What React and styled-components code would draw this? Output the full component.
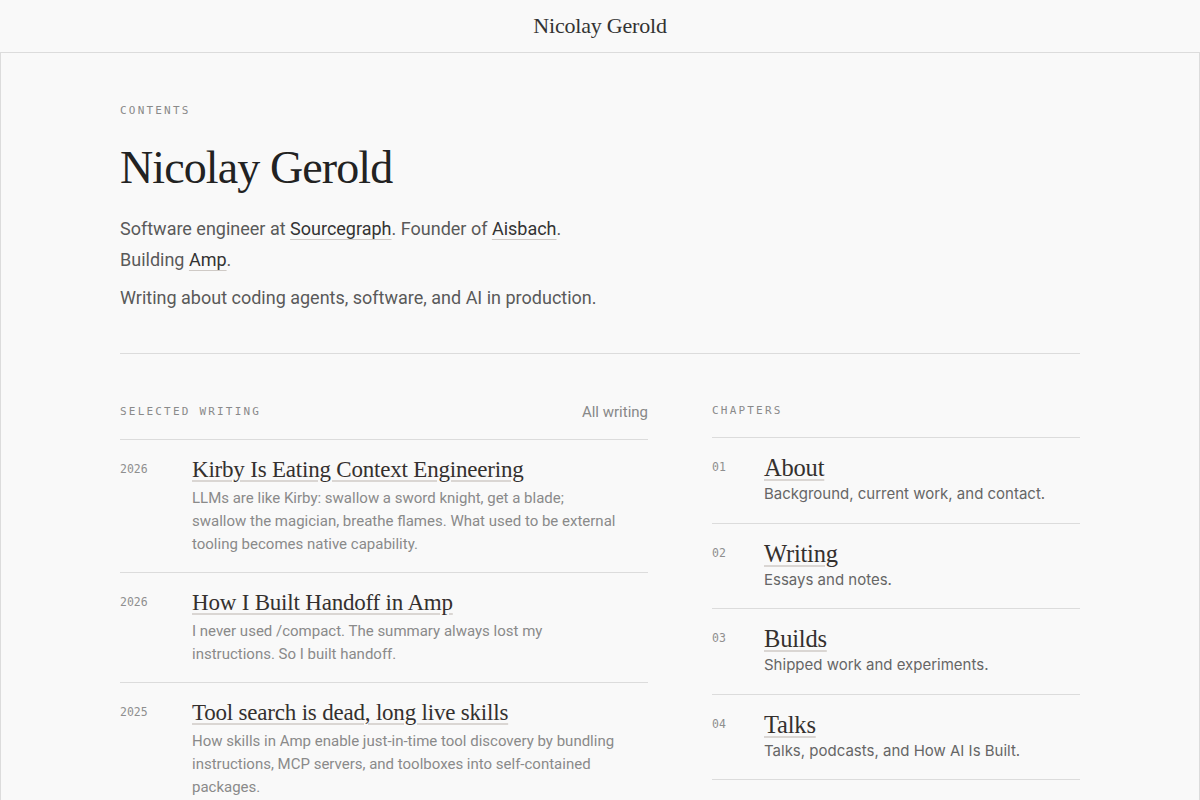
import React from "react";
import styled, { createGlobalStyle } from "styled-components";

const serif = `"Liberation Serif", "DejaVu Serif", serif`;
const sans = `Inter, "Noto Sans", "Liberation Sans", sans-serif`;
const text = `Roboto, Inter, "Liberation Sans", sans-serif`;
const mono = `"DejaVu Sans Mono", "Liberation Mono", monospace`;

const GlobalStyle = createGlobalStyle`
  html, body {
    margin: 0;
    padding: 0;
    background: #f9f9f9;
  }
  body {
    font-family: ${sans};
    color: #333;
    -webkit-font-smoothing: antialiased;
  }
  * { box-sizing: border-box; }
`;

const Page = styled.div`
  min-height: 100vh;
  display: flex;
  flex-direction: column;
  background: #f9f9f9;
`;

const TopBar = styled.header`
  height: 53px;
  display: flex;
  align-items: center;
  justify-content: center;
  border-bottom: 1px solid #dcdcdc;
`;

const SiteName = styled.a`
  font-family: ${serif};
  font-size: 22px;
  letter-spacing: -0.2px;
  color: #333;
  text-decoration: none;
`;

const Sheet = styled.main`
  flex: 1;
  border-left: 1px solid #dcdcdc;
  border-right: 1px solid #dcdcdc;
  padding: 48px 0 0;
`;

const Inner = styled.div`
  width: 960px;
  margin: 0 auto;
`;

const Intro = styled.section`
  padding-bottom: 40px;
  border-bottom: 1px solid #dcdcdc;
`;

const Eyebrow = styled.div`
  font-family: ${mono};
  font-size: 11px;
  line-height: 20px;
  letter-spacing: 0.2em;
  text-transform: uppercase;
  color: #8a8a8a;
`;

const Name = styled.h1`
  margin: 22px 0 20px;
  font-family: ${serif};
  font-weight: 400;
  font-size: 46px;
  line-height: 50px;
  letter-spacing: -0.9px;
  color: #222;
`;

const Bio = styled.p`
  margin: 0;
  font-family: ${text};
  font-size: 18px;
  line-height: 31px;
  color: #5a5a5a;
  & + & {
    margin-top: 7px;
  }
`;

const InlineLink = styled.a`
  color: #333;
  text-decoration: underline;
  text-decoration-color: #cfcac6;
  text-decoration-thickness: 1px;
  text-underline-offset: 4px;
`;

const Columns = styled.div`
  display: grid;
  grid-template-columns: minmax(0, 528fr) minmax(0, 368fr);
  column-gap: 64px;
  padding-top: 47px;
  align-items: start;
`;

const SectionHead = styled.div`
  display: flex;
  align-items: center;
  justify-content: space-between;
  padding-bottom: 16px;
  border-bottom: 1px solid #dcdcdc;
`;

const MoreLink = styled.a`
  font-family: ${text};
  font-size: 15px;
  line-height: 22px;
  color: #888;
  text-decoration: none;
`;

const List = styled.ul`
  list-style: none;
  margin: 0;
  padding: 0;
`;

const Row = styled.li`
  display: grid;
  grid-template-columns: ${(p) => p.$lead}px minmax(0, 1fr);
  padding: 16px 0;
  border-bottom: 1px solid #dcdcdc;
`;

const Marker = styled.span`
  font-family: ${mono};
  font-size: 11.5px;
  line-height: 27px;
  color: #8f8f8f;
`;

const EntryTitle = styled.a`
  justify-self: start;
  font-family: ${serif};
  font-size: ${(p) => p.$size}px;
  line-height: 28px;
  letter-spacing: -0.2px;
  color: #34302e;
  text-decoration: underline;
  text-decoration-color: #dad6d3;
  text-decoration-thickness: 2px;
  text-underline-offset: 3px;
`;

const Body = styled.div`
  display: flex;
  flex-direction: column;
`;

const Summary = styled.p`
  margin: 3px 0 0;
  max-width: 428px;
  font-family: ${text};
  font-size: 15px;
  line-height: 23px;
  color: #8a8a8a;
`;

const Blurb = styled.p`
  margin: 0;
  font-family: ${sans};
  font-size: 15px;
  line-height: 24.5px;
  color: #666;
`;

const writing = [
  {
    year: "2026",
    title: "Kirby Is Eating Context Engineering",
    text: "LLMs are like Kirby: swallow a sword knight, get a blade; swallow the magician, breathe flames. What used to be external tooling becomes native capability.",
  },
  {
    year: "2026",
    title: "How I Built Handoff in Amp",
    text: "I never used /compact. The summary always lost my instructions. So I built handoff.",
  },
  {
    year: "2025",
    title: "Tool search is dead, long live skills",
    text: "How skills in Amp enable just-in-time tool discovery by bundling instructions, MCP servers, and toolboxes into self-contained packages.",
  },
];

const chapters = [
  { n: "01", title: "About", text: "Background, current work, and contact." },
  { n: "02", title: "Writing", text: "Essays and notes." },
  { n: "03", title: "Builds", text: "Shipped work and experiments." },
  { n: "04", title: "Talks", text: "Talks, podcasts, and How AI Is Built." },
];

export default function App() {
  return (
    <Page>
      <GlobalStyle />
      <TopBar>
        <SiteName href="#">Nicolay Gerold</SiteName>
      </TopBar>
      <Sheet>
        <Inner>
          <Intro>
            <Eyebrow>Contents</Eyebrow>
            <Name>Nicolay Gerold</Name>
            <Bio>
              Software engineer at <InlineLink href="#">Sourcegraph</InlineLink>.
              Founder of <InlineLink href="#">Aisbach</InlineLink>.
              <br />
              Building <InlineLink href="#">Amp</InlineLink>.
            </Bio>
            <Bio>Writing about coding agents, software, and AI in production.</Bio>
          </Intro>
          <Columns>
            <section>
              <SectionHead>
                <Eyebrow>Selected writing</Eyebrow>
                <MoreLink href="#">All writing</MoreLink>
              </SectionHead>
              <List>
                {writing.map((w) => (
                  <Row key={w.title} $lead={72}>
                    <Marker>{w.year}</Marker>
                    <Body>
                      <EntryTitle href="#" $size={23}>
                        {w.title}
                      </EntryTitle>
                      <Summary>{w.text}</Summary>
                    </Body>
                  </Row>
                ))}
              </List>
            </section>
            <section>
              <SectionHead>
                <Eyebrow>Chapters</Eyebrow>
              </SectionHead>
              <List>
                {chapters.map((c) => (
                  <Row key={c.n} $lead={52}>
                    <Marker>{c.n}</Marker>
                    <Body>
                      <EntryTitle href="#" $size={24.5}>
                        {c.title}
                      </EntryTitle>
                      <Blurb>{c.text}</Blurb>
                    </Body>
                  </Row>
                ))}
              </List>
            </section>
          </Columns>
        </Inner>
      </Sheet>
    </Page>
  );
}
